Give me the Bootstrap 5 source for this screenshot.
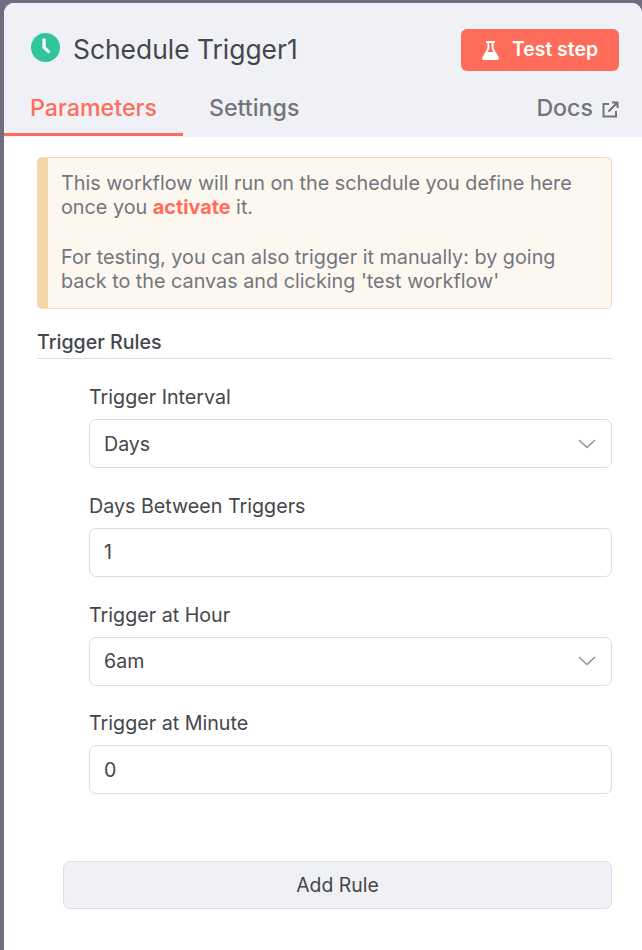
<!DOCTYPE html>
<html lang="en">
<head>
    <meta charset="UTF-8">
    <title>Schedule Trigger1</title>
    <meta name="viewport" content="width=device-width, initial-scale=1.0">
    <link href="https://cdn.jsdelivr.net/npm/bootstrap@5.3.2/dist/css/bootstrap.min.css" rel="stylesheet">
    <style>
        html, body {
            height: 950px;
            overflow: hidden;
        }

        body {
            font-family: Inter, "Liberation Sans", sans-serif;
            background: #6f6e80;
            color: #45464b;
            padding: 3px 0 0 4px;
        }

        .panel {
            height: 947px;
            background: #fff;
            border-top-left-radius: 10px;
            border-top-right-radius: 10px;
        }

        .panel-head {
            height: 134px;
            background: #f0f1f7;
            border-top-left-radius: 10px;
            border-top-right-radius: 10px;
            padding: 26px 23px 0 26px;
        }

        .title-icon {
            width: 29px;
            height: 29px;
            margin-left: 1px;
            margin-right: 13px;
            margin-bottom: 6px;
        }

        .panel-title {
            font-size: 26.4px;
            font-weight: 400;
            line-height: 40px;
            margin-top: -2px;
        }

        .test-btn {
            width: 158px;
            height: 42px;
            background: #ff6d5a;
            color: #fff;
            border: 0;
            border-radius: 6px;
            font-size: 19.4px;
            font-weight: 600;
            padding: 0;
        }

        .flask-icon {
            margin-right: 13px;
        }

        .panel-tabs {
            margin-left: -26px;
            margin-top: 22px;
        }

        .tab-item {
            font-size: 23.2px;
            font-weight: 500;
            line-height: 30px;
            color: #74757c;
            text-decoration: none;
            height: 43px;
        }

        .docs-link {
            gap: 9px;
        }

        .tab-on {
            width: 179px;
            text-align: center;
            color: #ff6d5a;
            border-bottom: 3px solid #ff6d5a;
            margin-right: 26px;
        }

        .panel-body {
            padding: 20px 30px 0 33px;
        }

        .hint {
            height: 152px;
            background: #fcf8f0;
            border: 1px solid #f3dcb0;
            border-left: 11px solid #f3d7a8;
            border-radius: 5px;
            padding: 13px 12px 14px 13px;
            font-size: 19.8px;
            line-height: 24.3px;
            color: #74757c;
        }

        .hint b {
            color: #ff6d5a;
            font-weight: 700;
        }

        .hint p {
            margin: 0 0 25px;
        }

        .rules-title {
            font-size: 19.6px;
            font-weight: 500;
            line-height: 24px;
            padding: 21px 0 4px;
            border-bottom: 1px solid #dcdde8;
        }

        .rule-fields {
            padding-left: 52px;
            padding-top: 26.2px;
        }

        .field-label {
            display: block;
            font-size: 19.7px;
            line-height: 24px;
            margin-bottom: 10px;
        }

        .field-box {
            height: 49px;
            border: 1px solid #dcdde8;
            border-radius: 7px;
            padding: 0 14px;
            font-size: 19.6px;
            color: #45464b;
            margin-bottom: 25.7px;
            box-shadow: none;
        }

        select.field-box {
            padding-top: 2px;
            background-image: url("data:image/svg+xml,%3csvg xmlns='http://www.w3.org/2000/svg' viewBox='0 0 18 10'%3e%3cpath fill='none' stroke='%23909298' stroke-width='1.5' d='M1 1l8 7.500 8-7.500'/%3e%3c/svg%3e");
            background-size: 18px 10px;
            background-position: right 15px center;
        }

        .add-rule {
            display: block;
            width: 549px;
            height: 48px;
            margin: 67px 0 0 26px;
            background: #f0f1f7;
            border: 1px solid #dcdde8;
            border-radius: 7px;
            font-size: 19.4px;
            font-weight: 400;
            color: #45464b;
        }
    </style>
</head>
<body>
    <div class="panel">
        <div class="panel-head">
            <div class="d-flex align-items-center justify-content-between">
                <div class="d-flex align-items-center">
                    <svg class="title-icon" viewBox="0 0 29 29">
                        <circle cx="14.500" cy="14.500" r="14.500" fill="#31c49f"/>
                        <path d="M11.500 5.500h3.200v8.300l4.800 4.600-2.200 2.200-5.800-5.500z" fill="#fff"/>
                    </svg>
                    <span class="panel-title">Schedule Trigger1</span>
                </div>
                <button class="test-btn d-flex align-items-center justify-content-center">
                    <svg class="flask-icon" width="17" height="19" viewBox="0 0 17 19">
                        <path d="M4 0h9v2h-1.400v5.200l5 9c.7 1.300-.1 2.800-1.600 2.800H2c-1.500 0-2.300-1.500-1.600-2.800l5-9V2H4zM7.300 2v5.700L5.500 11h6l-1.800-3.300V2z" fill="#fff" fill-rule="evenodd"/>
                    </svg>
                    Test step
                </button>
            </div>
            <div class="panel-tabs d-flex">
                <a href="#" class="tab-item tab-on">Parameters</a>
                <a href="#" class="tab-item">Settings</a>
                <a href="#" class="tab-item docs-link ms-auto d-flex align-items-start">
                    Docs
                    <svg class="mt-2" width="17" height="17" viewBox="0 0 17 17" fill="none" stroke="#74757c" stroke-width="2">
                        <path d="M7 3H1.500v12.500H14V10M6.500 10.500 15.500 1.500M10 1.500h5.500V7"/>
                    </svg>
                </a>
            </div>
        </div>
        <div class="panel-body">
            <div class="hint">
                <p>This workflow will run on the schedule you define here once you <b>activate</b> it.</p>
                For testing, you can also trigger it manually: by going back to the canvas and clicking 'test workflow'
            </div>
            <div class="rules-title">Trigger Rules</div>
            <div class="rule-fields">
                <label class="field-label">Trigger Interval</label>
                <select class="form-select field-box"><option>Days</option></select>
                <label class="field-label">Days Between Triggers</label>
                <input class="form-control field-box" value="1">
                <label class="field-label">Trigger at Hour</label>
                <select class="form-select field-box"><option>6am</option></select>
                <label class="field-label">Trigger at Minute</label>
                <input class="form-control field-box" value="0">
            </div>
            <button class="add-rule">Add Rule</button>
        </div>
    </div>
</body>
</html>
